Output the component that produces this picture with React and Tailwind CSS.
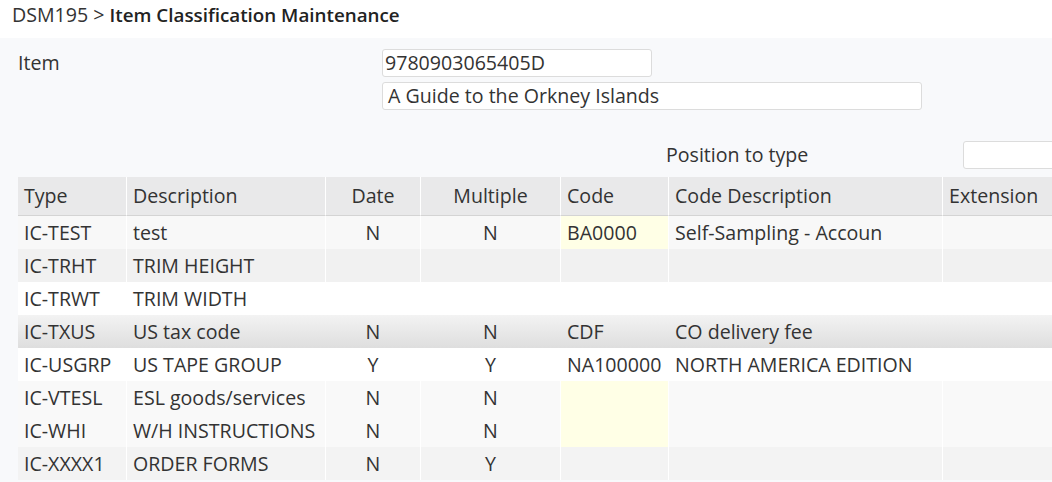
const rows = [
  { t: "IC-TEST", d: "test", date: "N", mult: "N", code: "BA0000", cd: "Self-Sampling - Accoun", bg: "bg-[#f8f8f8]", sep: true, yellow: true },
  { t: "IC-TRHT", d: "TRIM HEIGHT", date: "", mult: "", code: "", cd: "", bg: "bg-[#f1f1f1]", sep: true },
  { t: "IC-TRWT", d: "TRIM WIDTH", date: "", mult: "", code: "", cd: "", bg: "bg-white" },
  { t: "IC-TXUS", d: "US tax code", date: "N", mult: "N", code: "CDF", cd: "CO delivery fee", bg: "bg-gradient-to-b from-[#f3f3f3] to-[#dedede]" },
  { t: "IC-USGRP", d: "US TAPE GROUP", date: "Y", mult: "Y", code: "NA100000", cd: "NORTH AMERICA EDITION", bg: "bg-white" },
  { t: "IC-VTESL", d: "ESL goods/services", date: "N", mult: "N", code: "", cd: "", bg: "bg-[#f9f9f9]", sep: true, yellow: true },
  { t: "IC-WHI", d: "W/H INSTRUCTIONS", date: "N", mult: "N", code: "", cd: "", bg: "bg-[#f9f9f9]", sep: true, yellow: true },
  { t: "IC-XXXX1", d: "ORDER FORMS", date: "N", mult: "Y", code: "", cd: "", bg: "bg-[#f3f3f3]", sep: true },
];

function Cell({ children, sep, first, center, className = "" }) {
  return (
    <td
      className={
        "h-[33px] px-[6px] whitespace-nowrap overflow-hidden " +
        (first ? "" : sep ? "border-l border-white " : "border-l border-transparent ") +
        (center ? "text-center " : "") +
        className
      }
    >
      {children}
    </td>
  );
}

export default function App() {
  return (
    <div className="w-[1052px] h-[482px] overflow-hidden bg-white text-[#333] font-['Open_Sans',sans-serif] text-[19.6px]">
      <div className="h-[38px] pl-[12px] whitespace-nowrap">
        DSM195 &gt; <span className="font-semibold text-[#222] text-[18.8px]">Item Classification Maintenance</span>
      </div>
      <div className="bg-[#f8f9fb] h-full pl-[18px]">
        <div className="flex pt-[11px]">
          <div className="w-[364px] leading-[28px]">Item</div>
          <div className="flex flex-col gap-[5px]">
            <div className="w-[270px] h-[28px] bg-white border border-[#dcdcdc] rounded-[3px] px-[2px] leading-[26px]">9780903065405D</div>
            <div className="w-[540px] h-[28px] bg-white border border-[#dcdcdc] rounded-[3px] px-[5px] leading-[26px]">A Guide to the Orkney Islands</div>
          </div>
        </div>
        <div className="flex items-end h-[67px] pb-[8px] whitespace-nowrap">
          <div className="ml-[648px] w-[297px] shrink-0 leading-[28px]">Position to type</div>
          <div className="w-[120px] h-[28px] shrink-0 bg-white border border-[#dcdcdc] rounded-[3px]"></div>
        </div>
        <table className="table-fixed border-separate border-spacing-0 w-[1044px]">
          <colgroup>
            <col className="w-[108px]" />
            <col className="w-[199px]" />
            <col className="w-[95px]" />
            <col className="w-[140px]" />
            <col className="w-[108px]" />
            <col className="w-[274px]" />
            <col className="w-[120px]" />
          </colgroup>
          <thead>
            <tr className="bg-[#e9e9ea]">
              <th className="h-[39px] px-[6px] font-normal text-left border-b border-[#d4d4d4]">Type</th>
              <th className="px-[6px] font-normal text-left border-l border-white border-b border-b-[#d4d4d4]">Description</th>
              <th className="px-[6px] font-normal text-center border-l border-white border-b border-b-[#d4d4d4]">Date</th>
              <th className="px-[6px] font-normal text-center border-l border-white border-b border-b-[#d4d4d4]">Multiple</th>
              <th className="px-[6px] font-normal text-left border-l border-white border-b border-b-[#d4d4d4]">Code</th>
              <th className="px-[6px] font-normal text-left border-l border-white border-b border-b-[#d4d4d4]">Code Description</th>
              <th className="px-[6px] font-normal text-left border-l border-white border-b border-b-[#d4d4d4]">Extension</th>
            </tr>
          </thead>
          <tbody>
            {rows.map((r) => (
              <tr key={r.t} className={r.bg}>
                <Cell first>{r.t}</Cell>
                <Cell sep={r.sep}>{r.d}</Cell>
                <Cell sep={r.sep} center>{r.date}</Cell>
                <Cell sep={r.sep} center>{r.mult}</Cell>
                <Cell sep={r.sep} className={r.yellow ? "bg-[#ffffe6]" : ""}>{r.code}</Cell>
                <Cell sep={r.sep}>{r.cd}</Cell>
                <Cell sep={r.sep}></Cell>
              </tr>
            ))}
          </tbody>
        </table>
      </div>
    </div>
  );
}
